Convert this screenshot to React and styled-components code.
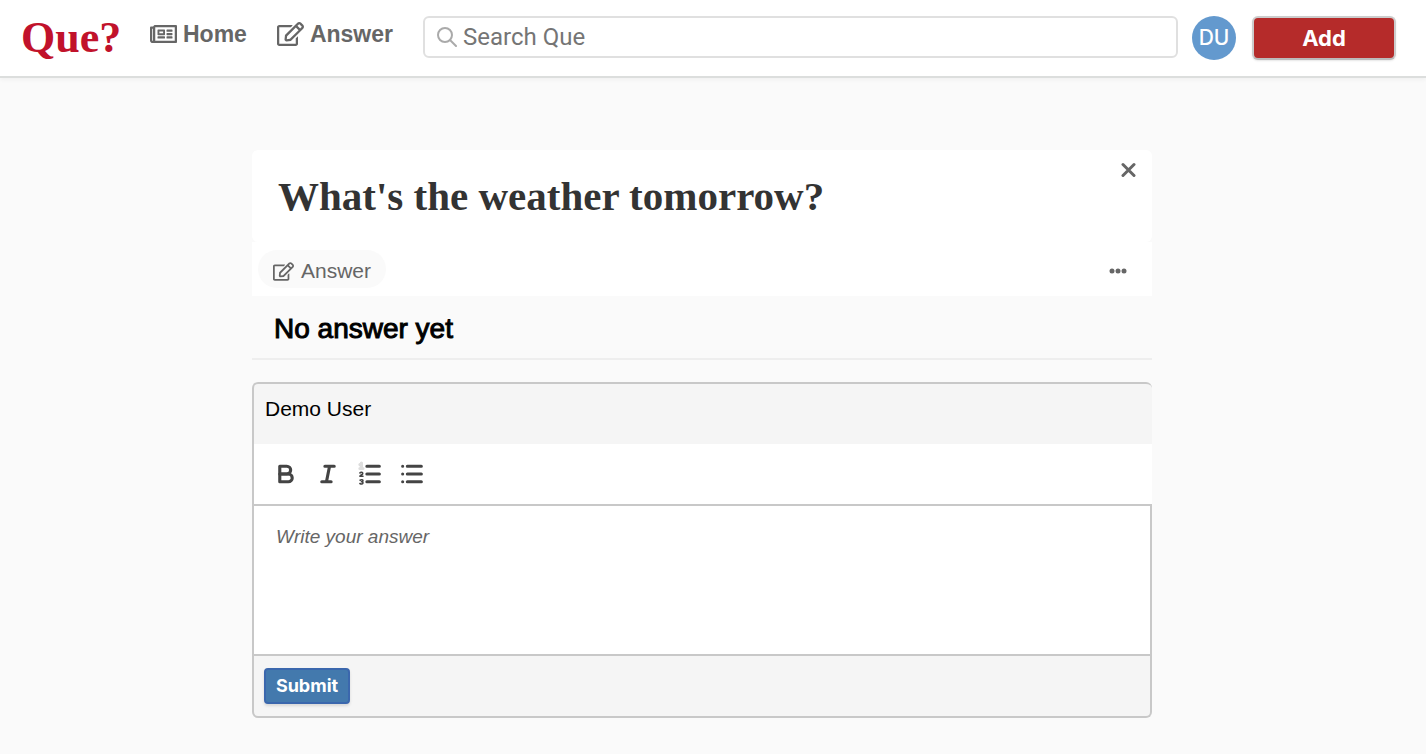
import React from 'react';
import styled, { createGlobalStyle } from 'styled-components';
import { FaRegNewspaper, FaRegEdit } from 'react-icons/fa';

const sans = '"Liberation Sans", Arial, sans-serif';
const ui = 'Inter, "Liberation Sans", sans-serif';
const serif = '"Liberation Serif", Georgia, serif';
const line = '#c8c8c8';

const GlobalStyle = createGlobalStyle`
  *, *::before, *::after { box-sizing: border-box; }
  body { margin: 0; background: #fafafa; color: #000; font-family: ${sans}; }
  h1, h2, p { margin: 0; font-weight: 400; }
  button, input, textarea { font: inherit; margin: 0; }
  button { cursor: pointer; }
`;

const Header = styled.header`
  display: flex;
  align-items: flex-start;
  height: 78px;
  padding: 16px 30px 0 21px;
  background: #fff;
  border-bottom: 2px solid #dcdedd;
  box-shadow: 0 2px 4px rgba(0, 0, 0, 0.04);
`;

const Logo = styled.a`
  width: 100px;
  margin-right: 29px;
  color: #c1122b;
  font: 700 44px/44px ${serif};
  text-decoration: none;
`;

const Nav = styled.nav`
  display: flex;
  gap: 30px;
  margin-right: 30px;
`;

const NavLink = styled.a`
  display: flex;
  align-items: center;
  gap: 6px;
  height: 36px;
  color: #666;
  font-size: 23px;
  font-weight: 700;
  text-decoration: none;

  svg { width: 27px; height: 24px; }
`;

const SearchBox = styled.label`
  display: flex;
  flex: 1;
  align-items: center;
  gap: 6px;
  min-width: 0;
  height: 42px;
  padding: 0 12px;
  border: 2px solid #e0e0e0;
  border-radius: 6px;
`;

const SearchInput = styled.input`
  flex: 1;
  min-width: 0;
  height: 36px;
  padding: 0;
  border: 0;
  outline: 0;
  background: transparent;
  font: 400 24px/36px Roboto, ${ui};

  &::placeholder { color: #757575; opacity: 1; }
`;

const Avatar = styled.button`
  width: 44px;
  height: 44px;
  margin: 0 16px 0 14px;
  padding: 0;
  border: 0;
  border-radius: 50%;
  background: #6399ce;
  color: #fff;
  font: 500 21px/44px ${ui};
`;

const AddButton = styled.button`
  width: 144px;
  height: 44px;
  padding: 0;
  border: 2px solid #ccc;
  border-bottom-color: #bbb;
  border-radius: 6px;
  background: #b52b2a;
  box-shadow: 0 1px 2px rgba(0, 0, 0, 0.1);
  color: #fff;
  font: 700 22px/40px ${ui};
`;

const Main = styled.main`
  max-width: 922px;
  margin: 72px auto 36px;
  padding-right: 22px;
`;

const QuestionTop = styled.div`
  display: flex;
  align-items: flex-start;
  justify-content: space-between;
  height: 92px;
  padding: 10px 14px 0 26px;
  border-radius: 6px;
  background: #fff;
`;

const Title = styled.h1`
  padding-top: 12px;
  color: #333;
  font: 700 41px/48px ${serif};
`;

const IconButton = styled.button`
  display: flex;
  align-items: center;
  justify-content: center;
  width: ${(p) => p.$size}px;
  height: ${(p) => p.$size}px;
  padding: 0;
  border: 0;
  background: transparent;
  color: #666;
`;

const QuestionActions = styled.div`
  display: flex;
  align-items: flex-start;
  justify-content: space-between;
  height: 54px;
  padding: 8px 24px 8px 6px;
  background: #fff;

  > ${IconButton} { height: 42px; }
`;

const AnswerPill = styled.button`
  display: flex;
  align-items: center;
  gap: 7px;
  height: 38px;
  padding: 4px 15px 0 15px;
  border: 0;
  border-radius: 19px;
  background: #fafafa;
  color: #666;
  font-size: 21px;
`;

const EmptyNote = styled.h2`
  height: 64px;
  padding-left: 22px;
  border-bottom: 2px solid #eee;
  font-size: 28px;
  line-height: 66px;
  -webkit-text-stroke: 1px #000;
`;

const Editor = styled.form`
  margin-top: 22px;
`;

const EditorPart = styled.div`
  border: 0 solid ${line};
  border-left-width: 2px;
`;

const Author = styled(EditorPart)`
  height: 62px;
  padding: 12px 11px;
  border-top-width: 2px;
  border-radius: 6px 6px 0 0;
  background: #f5f5f5;
  font-size: 21px;
  line-height: 26px;
`;

const Toolbar = styled(EditorPart)`
  display: flex;
  align-items: center;
  gap: 14px;
  height: 60px;
  padding-left: 18px;
  background: #fff;

  button { color: #444; }
`;

const AnswerField = styled.textarea`
  display: block;
  width: 100%;
  height: 152px;
  padding: 17px 22px;
  border: 2px solid ${line};
  border-radius: 0;
  outline: 0;
  resize: none;
  background: #fff;
  font-size: 19px;
  line-height: 28px;

  &::placeholder { color: #666; font-style: italic; opacity: 1; }
`;

const Footer = styled(EditorPart)`
  height: 62px;
  padding: 12px 10px;
  border-width: 0 2px 2px;
  border-radius: 0 0 6px 6px;
  background: #f5f5f5;
`;

const Submit = styled.button`
  display: block;
  width: 86px;
  height: 36px;
  padding: 0;
  border: 2px solid #3b67ad;
  border-radius: 4px;
  background: #4379ad;
  box-shadow: 0 2px 3px rgba(0, 0, 0, 0.12);
  color: #fff;
  font: 700 18px/32px ${ui};
`;

const Glyph = styled.svg`
  flex: none;
  fill: none;
  stroke: currentColor;
  stroke-width: ${(p) => p.$weight || 2};
  stroke-linecap: round;
  stroke-linejoin: round;
`;

const SearchIcon = () => (
  <Glyph width="20" height="20" viewBox="0 0 20 20" color="#aaa" aria-hidden="true">
    <circle cx="8" cy="8" r="7" />
    <path d="M13 13l6 6" />
  </Glyph>
);

const CloseIcon = () => (
  <Glyph $weight={3} width="16" height="16" viewBox="0 0 16 16" aria-hidden="true">
    <path d="M3 2.500l11 11M14 2.500L3 13.500" />
  </Glyph>
);

const DotsIcon = () => (
  <svg width="18" height="6" viewBox="0 0 18 6" fill="currentColor" aria-hidden="true">
    <circle cx="3" cy="3" r="2.5" />
    <circle cx="9" cy="3" r="2.5" />
    <circle cx="15" cy="3" r="2.5" />
  </svg>
);

const ToolGlyph = ({ children }) => (
  <Glyph width="28" height="28" viewBox="0 0 18 18" aria-hidden="true">{children}</Glyph>
);

const BoldIcon = () => (
  <ToolGlyph>
    <path d="M5 4h4.500A2.500 2.500 0 0 1 12 6.500A2.500 2.500 0 0 1 9.500 9H5V4z" />
    <path d="M5 9h5.500A2.500 2.500 0 0 1 13 11.500A2.500 2.500 0 0 1 10.500 14H5V9z" />
  </ToolGlyph>
);

const ItalicIcon = () => (
  <ToolGlyph>
    <path d="M7 4h6M5 14h6M8 14l2-10" />
  </ToolGlyph>
);

const OrderedIcon = () => (
  <ToolGlyph>
    <path d="M7 4h8M7 9h8M7 14h8" />
    <g strokeWidth="1" style={{ strokeWidth: 1 }}>
      <path d="M2.500 5.500h2M3.500 5.500v-3l-1 .5" stroke="#ddd" strokeWidth="2" />
      <path d="M3.500 2v3" stroke="#ddd" style={{ strokeWidth: 2 }} />
      <path d="M4.500 10.500h-2c0-.8 1.850-1 1.850-1.900s-1.400-.9-1.850-.3" />
      <path d="M2.500 15.100c1 .6 2 .3 2-.4 0-.6-.5-.7-1-.7.500 0 1-.2 1-.7 0-.6-1-.8-1.900-.3" />
    </g>
  </ToolGlyph>
);

const BulletIcon = () => (
  <ToolGlyph>
    <path d="M6 4h9M6 9h9M6 14h9M3 4v0M3 9v0M3 14v0" />
  </ToolGlyph>
);

const tools = [
  ['Bold', BoldIcon],
  ['Italic', ItalicIcon],
  ['Numbered list', OrderedIcon],
  ['Bulleted list', BulletIcon],
];

export default function App() {
  return (
    <>
      <GlobalStyle />
      <Header>
        <Logo href="#">Que?</Logo>
        <Nav>
          <NavLink href="#home"><FaRegNewspaper aria-hidden="true" />Home</NavLink>
          <NavLink href="#answer"><FaRegEdit aria-hidden="true" />Answer</NavLink>
        </Nav>
        <SearchBox>
          <SearchIcon />
          <SearchInput type="text" placeholder="Search Que" aria-label="Search Que" />
        </SearchBox>
        <Avatar type="button">DU</Avatar>
        <AddButton type="button">Add</AddButton>
      </Header>
      <Main>
        <section>
          <QuestionTop>
            <Title>What's the weather tomorrow?</Title>
            <IconButton type="button" $size={20} aria-label="Close"><CloseIcon /></IconButton>
          </QuestionTop>
          <QuestionActions>
            <AnswerPill type="button"><FaRegEdit aria-hidden="true" />Answer</AnswerPill>
            <IconButton type="button" $size={20} aria-label="More"><DotsIcon /></IconButton>
          </QuestionActions>
        </section>
        <EmptyNote>No answer yet</EmptyNote>
        <Editor onSubmit={(e) => e.preventDefault()}>
          <Author>Demo User</Author>
          <Toolbar>
            {tools.map(([name, Icon]) => (
              <IconButton key={name} type="button" $size={28} aria-label={name}><Icon /></IconButton>
            ))}
          </Toolbar>
          <AnswerField placeholder="Write your answer" aria-label="Write your answer" />
          <Footer>
            <Submit type="submit">Submit</Submit>
          </Footer>
        </Editor>
      </Main>
    </>
  );
}
